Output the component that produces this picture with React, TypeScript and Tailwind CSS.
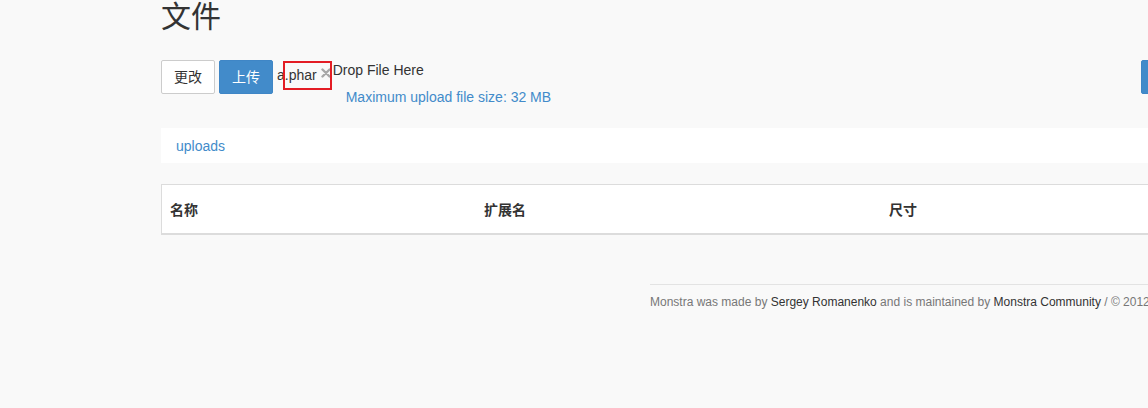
const font = "font-['Liberation_Sans','Noto_Sans_CJK_SC',sans-serif]";

export default function App() {
  return (
    <div className={`min-h-screen w-full overflow-hidden bg-[#f9f9f9] text-[#333] ${font}`}>
      <div className="pl-[161px]">
        <h2 className="text-[30px] leading-[33px] font-normal text-[#333]">文件</h2>

        <div className="mt-[27px] flex items-start">
          <button className="h-[34px] rounded-[2px] border border-[#ccc] bg-white px-3 text-[14px] leading-[20px] text-[#333]">
            更改
          </button>
          <button className="ml-1 h-[34px] rounded-[2px] border border-[#3f86c6] bg-[#428bca] px-3 text-[14px] leading-[20px] text-white">
            上传
          </button>
          <div className="ml-1 flex items-start text-[14px] leading-[20px]">
            <div className="relative mt-[5px] flex items-center">
              <span>a.phar</span>
              <svg width="10" height="10" viewBox="0 0 10 10" className="ml-[4px] mt-[-4px]">
                <path d="M1.5 1.5 L8.5 8.5 M8.5 1.5 L1.5 8.5" stroke="#a8a8a8" strokeWidth="2.4" strokeLinecap="round" />
              </svg>
              <div className="absolute left-[6px] top-[-4px] h-[29px] w-[49px] border-2 border-[#e31c24]" />
            </div>
            <div className="ml-[2px]">
              <div>Drop File Here</div>
              <div className="ml-[13px] mt-[7px] text-[#428bca]">Maximum upload file size: 32 MB</div>
            </div>
          </div>
          <div className="ml-auto -mr-[73px] h-[34px] w-[80px] rounded-[2px] border border-[#3f86c6] bg-[#428bca]" />
        </div>

        <div className="mt-[21px] flex h-[35px] items-center bg-white px-[15px] pt-[2px] text-[14px]">
          <a className="text-[#428bca]">uploads</a>
        </div>

        <div className="mt-[21px] flex h-[51px] border-t border-l border-b-2 border-[#dcdcdc] bg-white pt-[2px] text-[14px] font-bold">
          <div className="flex w-[314px] items-center px-2">名称</div>
          <div className="flex w-[405px] items-center px-2">扩展名</div>
          <div className="flex flex-1 items-center px-2">尺寸</div>
        </div>
      </div>

      <div className="mt-[49px] pl-[650px]">
        <div className="h-px w-[600px] bg-[#e3e3e3]" />
        <p className="mt-[9px] whitespace-nowrap text-[12px] leading-[17px] text-[#777]">
          Monstra was made by <a className="text-[#333]">Sergey Romanenko</a> and is maintained by{" "}
          <a className="text-[#333]">Monstra Community</a> / © 2012 - 2016 Monstra
        </p>
      </div>
    </div>
  );
}
